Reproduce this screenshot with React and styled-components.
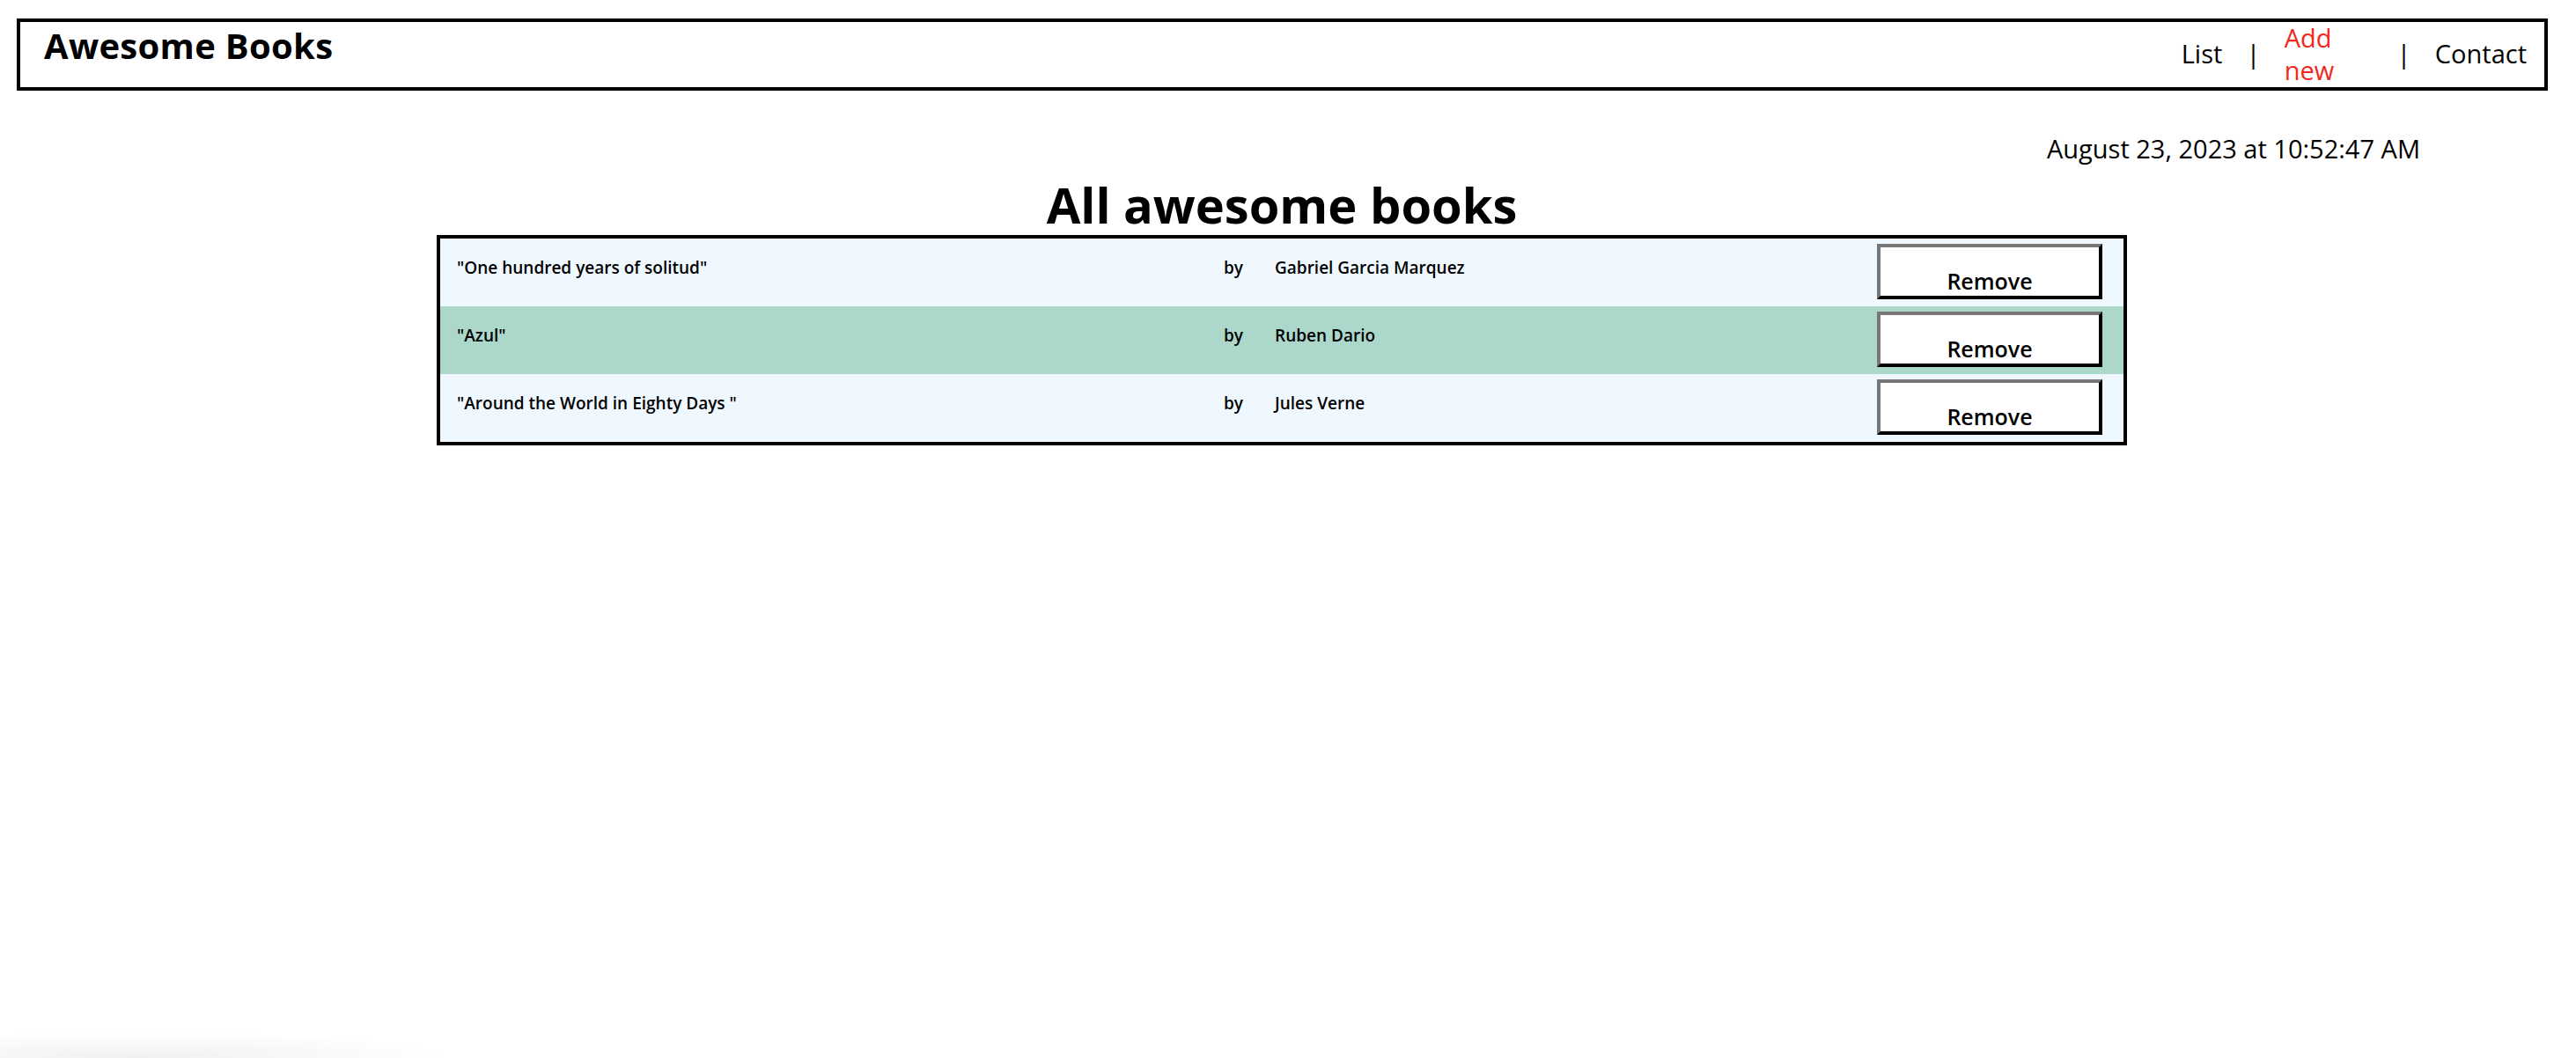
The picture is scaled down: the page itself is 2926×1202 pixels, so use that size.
import React from "react";
import styled, { createGlobalStyle } from "styled-components";

//#region Styles
const GlobalStyle = createGlobalStyle`
  html, body {
    margin: 0;
    padding: 0;
    background: #fff;
  }
  body {
    font-family: "Open Sans", "Noto Sans", "Liberation Sans", sans-serif;
    color: #000;
  }
`;

const Page = styled.div`
  min-height: 1202px;
  display: flex;
  flex-direction: column;
  position: relative;
`;

const Header = styled.header`
  margin: 21px 32px 0 19px;
  height: 74px;
  border: 4px solid #000;
  display: flex;
  align-items: center;
  justify-content: space-between;
  padding: 0 20px 0 27px;
`;

const Logo = styled.h1`
  margin: 0;
  align-self: flex-start;
  padding-top: 4px;
  font-size: 40px;
  font-weight: 700;
  letter-spacing: 0.3px;
  line-height: 46px;
`;

const Nav = styled.ul`
  list-style: none;
  margin: 0 0 3px;
  padding: 0;
  display: flex;
  align-items: center;
  font-size: 29px;
  line-height: 37px;
`;

const NavItem = styled.li`
  color: ${(p) => (p.$active ? "#f0281e" : "#000")};
  width: ${(p) => (p.$narrow ? "min-content" : "auto")};
  padding-right: ${(p) => (p.$narrow ? "44px" : "0")};
`;

const Divider = styled.li`
  margin: 0 27px;
  font-size: 30px;
`;

const DateLine = styled.p`
  margin: 46px 177px 0 0;
  text-align: right;
  font-size: 29px;
  line-height: 40px;
`;

const Title = styled.h2`
  margin: 10px 0 0;
  text-align: center;
  font-size: 56px;
  font-weight: 700;
  line-height: 66px;
  padding-right: 14px;
`;

const BookList = styled.ul`
  list-style: none;
  margin: 2px 0 0 496px;
  padding: 0;
  width: 1912px;
  border: 4px solid #000;
`;

const BookRow = styled.li`
  display: grid;
  grid-template-columns: 871px 58px 1fr 256px;
  align-items: start;
  height: 77px;
  padding: 0 24px 0 19px;
  background: ${(p) => (p.$alt ? "#acd8cc" : "#f0f8ff")};
  font-size: 19px;
  font-weight: 600;
`;

const Cell = styled.span`
  padding-top: 21px;
  line-height: 24px;
`;

const RemoveButton = styled.button`
  margin-top: 6px;
  height: 63px;
  width: 256px;
  background: #fff;
  border: 4px outset #767676;
  border-color: #777 #333 #333 #777;
  font-family: inherit;
  font-size: 25px;
  font-weight: 600;
  padding: 21px 0 0;
  line-height: 28px;
  color: #000;
`;

const CornerShade = styled.div`
  position: fixed;
  left: 0;
  bottom: 0;
  width: 520px;
  height: 30px;
  background: radial-gradient(ellipse at 30% 100%, rgba(0, 0, 0, 0.06), rgba(0, 0, 0, 0) 70%);
  pointer-events: none;
`;
//#endregion Styles

const books = [
  { title: '"One hundred years of solitud"', author: "Gabriel Garcia Marquez" },
  { title: '"Azul"', author: "Ruben Dario" },
  { title: '"Around the World in Eighty Days "', author: "Jules Verne" },
];

export default function App() {
  return (
    <>
      <GlobalStyle />
      <Page>
        <Header>
          <Logo>Awesome Books</Logo>
          <Nav>
            <NavItem>List</NavItem>
            <Divider>|</Divider>
            <NavItem $active $narrow>
              Add new
            </NavItem>
            <Divider>|</Divider>
            <NavItem>Contact</NavItem>
          </Nav>
        </Header>
        <DateLine>August 23, 2023 at 10:52:47 AM</DateLine>
        <Title>All awesome books</Title>
        <BookList>
          {books.map((book, i) => (
            <BookRow key={book.title} $alt={i % 2 === 1}>
              <Cell>{book.title}</Cell>
              <Cell>by</Cell>
              <Cell>{book.author}</Cell>
              <RemoveButton type="button">Remove</RemoveButton>
            </BookRow>
          ))}
        </BookList>
        <CornerShade />
      </Page>
    </>
  );
}
